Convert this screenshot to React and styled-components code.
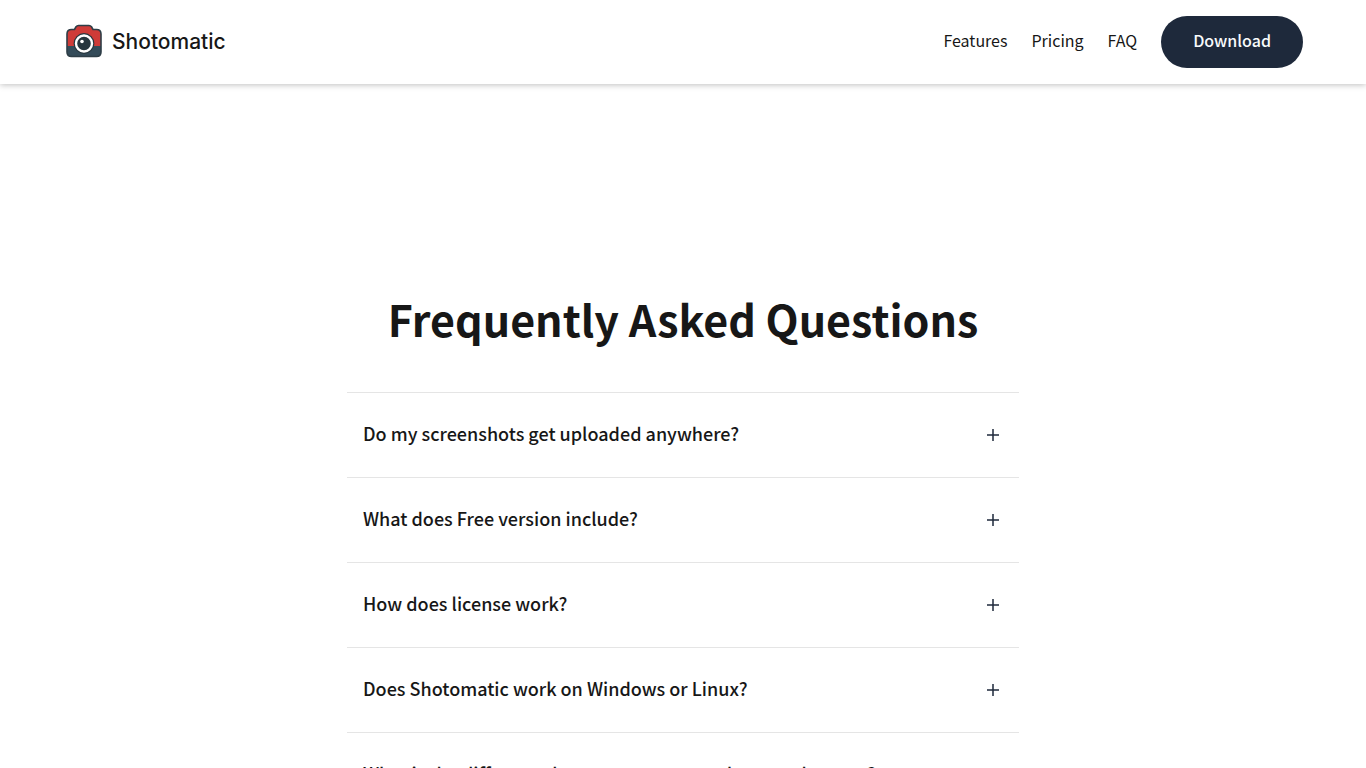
import React from "react";
import styled, { createGlobalStyle } from "styled-components";

const GlobalStyle = createGlobalStyle`
  *, *::before, *::after { box-sizing: border-box; }
  html, body { height: 100%; }
  body {
    margin: 0;
    overflow: hidden;
    background: #fff;
    color: #171717;
    font-family: "Noto Sans CJK SC", "Open Sans", sans-serif;
  }
`;

const Header = styled.header`
  background: #fff;
  box-shadow: 0 1px 6px rgba(0, 0, 0, 0.25);
`;

const Bar = styled.div`
  max-width: 1280px;
  margin: 0 auto;
  padding: 16px 20px;
  display: flex;
  align-items: center;
  justify-content: space-between;
`;

const Brand = styled.a`
  display: flex;
  align-items: center;
  gap: 9px;
  color: #171717;
  text-decoration: none;
  font: 500 21px/28px Inter, sans-serif;
`;

const Logo = styled.svg`
  width: 40px;
  height: 40px;
`;

const Nav = styled.nav`
  display: flex;
  align-items: center;
  gap: 24px;
`;

const NavLink = styled.a`
  padding-bottom: 4px;
  color: #171717;
  text-decoration: none;
  font-size: 16px;
  line-height: 28px;
`;

const DownloadButton = styled.button`
  border: 0;
  border-radius: 26px;
  padding: 10px 32px 14px;
  background: #1e293b;
  color: #f8fafc;
  font: inherit;
  font-size: 16px;
  font-weight: 500;
  line-height: 28px;
`;

const Faq = styled.main`
  max-width: 704px;
  margin: 0 auto;
  padding: 208px 16px 96px;
`;

const Title = styled.h1`
  margin: 0 0 48px;
  text-align: center;
  font-size: 43px;
  line-height: 52px;
  font-weight: 700;
`;

const List = styled.ul`
  margin: 0;
  padding: 0;
  list-style: none;
`;

const Item = styled.li`
  border-top: 1px solid #e5e5e5;
`;

const Question = styled.button`
  width: 100%;
  border: 0;
  padding: 28px 16px;
  display: flex;
  align-items: center;
  justify-content: space-between;
  background: none;
  color: inherit;
  font: inherit;
  font-size: 18px;
  font-weight: 500;
  line-height: 24px;
  text-align: left;
`;

const QuestionText = styled.span`
  padding-bottom: 4px;
`;

const PlusIcon = styled.svg`
  width: 20px;
  height: 20px;
  stroke: #1e293b;
`;

const questions = [
  "Do my screenshots get uploaded anywhere?",
  "What does Free version include?",
  "How does license work?",
  "Does Shotomatic work on Windows or Linux?",
  "What is the difference between camera and screenshot app?",
];

function CameraLogo() {
  return (
    <Logo viewBox="-1 0 40 40" aria-hidden="true">
      <path d="M3 24V12Q3 7.500 7.500 7.500H10.500L12 4.800Q13 3.500 14.500 3.500H25Q26.500 3.500 27.500 4.800L29 7.500H32.500Q37 7.500 37 12V24Z" fill="#cf3b38" />
      <path d="M3 24H37V30Q37 34.500 32.500 34.500H7.500Q3 34.500 3 30Z" fill="#344b59" />
      <path d="M7.500 7.500H10.500L12 4.800Q13 3.500 14.500 3.500H25Q26.500 3.500 27.500 4.800L29 7.500H32.500Q37 7.500 37 12V30Q37 34.500 32.500 34.500H7.500Q3 34.500 3 30V12Q3 7.500 7.500 7.500Z" fill="none" stroke="#2e3e47" strokeWidth="1.600" />
      <circle cx="20" cy="21.500" r="10.400" fill="#26363e" />
      <circle cx="20" cy="21.500" r="8" fill="#26363e" stroke="#fff" strokeWidth="2.400" />
      <circle cx="18" cy="19.500" r="1.800" fill="#fff" />
    </Logo>
  );
}

export default function App() {
  return (
    <>
      <GlobalStyle />
      <Header>
        <Bar>
          <Brand href="#home">
            <CameraLogo />
            Shotomatic
          </Brand>
          <Nav>
            <NavLink href="#features">Features</NavLink>
            <NavLink href="#pricing">Pricing</NavLink>
            <NavLink href="#faq">FAQ</NavLink>
            <DownloadButton type="button">Download</DownloadButton>
          </Nav>
        </Bar>
      </Header>
      <Faq id="faq">
        <Title>Frequently Asked Questions</Title>
        <List>
          {questions.map((question) => (
            <Item key={question}>
              <Question type="button" aria-expanded="false">
                <QuestionText>{question}</QuestionText>
                <PlusIcon viewBox="0 0 20 20" aria-hidden="true">
                  <path d="M10 4V16M4 10H16" strokeWidth="1.500" />
                </PlusIcon>
              </Question>
            </Item>
          ))}
        </List>
      </Faq>
    </>
  );
}
